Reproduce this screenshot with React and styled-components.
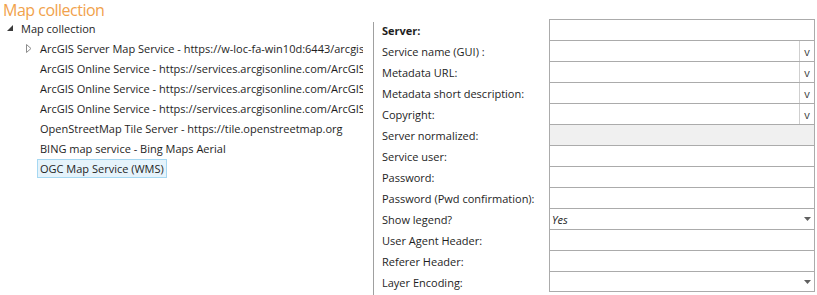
import React from 'react';
import styled, { createGlobalStyle } from 'styled-components';

const GlobalStyle = createGlobalStyle`
  html, body {
    margin: 0;
    padding: 0;
    background: #ffffff;
  }
  body {
    font-family: "Open Sans", "Noto Sans", sans-serif;
    font-size: 11px;
    color: #1e1e1e;
  }
`;

const treeItems = [
  { text: 'ArcGIS Server Map Service - https://w-loc-fa-win10d:6443/arcgis/rest/services', expandable: true },
  { text: 'ArcGIS Online Service - https://services.arcgisonline.com/ArcGIS/rest/services' },
  { text: 'ArcGIS Online Service - https://services.arcgisonline.com/ArcGIS/rest/services' },
  { text: 'ArcGIS Online Service - https://services.arcgisonline.com/ArcGIS/rest/services' },
  { text: 'OpenStreetMap Tile Server - https://tile.openstreetmap.org' },
  { text: 'BING map service - Bing Maps Aerial' },
  { text: 'OGC Map Service (WMS)', selected: true },
];

const fields = [
  { label: 'Server:', bold: true },
  { label: 'Service name (GUI) :', kind: 'button' },
  { label: 'Metadata URL:', kind: 'button' },
  { label: 'Metadata short description:', kind: 'button' },
  { label: 'Copyright:', kind: 'button' },
  { label: 'Server normalized:', disabled: true },
  { label: 'Service user:' },
  { label: 'Password:' },
  { label: 'Password (Pwd confirmation):' },
  { label: 'Show legend?', kind: 'select', value: 'Yes' },
  { label: 'User Agent Header:' },
  { label: 'Referer Header:' },
  { label: 'Layer Encoding:', kind: 'select' },
];

const ExpandedGlyph = () => (
  <svg width="6" height="6" viewBox="0 0 6 6">
    <path d="M6 0 L6 6 L0 6 Z" fill="#3c3c3c" />
  </svg>
);

const CollapsedGlyph = () => (
  <svg width="6" height="9" viewBox="0 0 6 9">
    <path d="M0.5 0.5 L5 4.5 L0.5 8.5 Z" fill="none" stroke="#8c8c8c" strokeWidth="1" />
  </svg>
);

const App = () => {
  return (
    <>
      <GlobalStyle />
      <Page>
        <LeftPane>
          <Title>Map collection</Title>
          <Tree>
            <TreeRow indent={2}>
              <Toggle>
                <ExpandedGlyph />
              </Toggle>
              <ItemLabel>Map collection</ItemLabel>
            </TreeRow>
            {treeItems.map((item, i) => (
              <TreeRow key={i} indent={21}>
                <Toggle>{item.expandable && <CollapsedGlyph />}</Toggle>
                <ItemLabel selected={item.selected}>{item.text}</ItemLabel>
              </TreeRow>
            ))}
          </Tree>
        </LeftPane>
        <Splitter />
        <Form>
          {fields.map((f, i) => (
            <FormRow key={i}>
              <Label bold={f.bold}>{f.label}</Label>
              <Field disabled={f.disabled} last={i === fields.length - 1}>
                <FieldValue>{f.value}</FieldValue>
                {f.kind === 'button' && <MoreButton>v</MoreButton>}
                {f.kind === 'select' && (
                  <SelectArrow>
                    <svg width="7" height="4" viewBox="0 0 7 4">
                      <path d="M0 0 L7 0 L3.5 4 Z" fill="#606060" />
                    </svg>
                  </SelectArrow>
                )}
              </Field>
            </FormRow>
          ))}
        </Form>
      </Page>
    </>
  );
};

export default App;

const Page = styled.div`
  display: flex;
  width: 817px;
  height: 295px;
  overflow: hidden;
`;

const LeftPane = styled.div`
  width: 373px;
  flex: none;
  display: flex;
  flex-direction: column;
`;

const Title = styled.div`
  height: 18px;
  line-height: 20px;
  padding-left: 3px;
  font-size: 16px;
  letter-spacing: -0.5px;
  color: #f1a24c;
  white-space: nowrap;
`;

const Tree = styled.div`
  display: flex;
  flex-direction: column;
  padding-right: 10px;
`;

const TreeRow = styled.div`
  display: flex;
  align-items: center;
  height: 20px;
  padding-left: ${({ indent }) => indent}px;
  white-space: nowrap;
  overflow: hidden;
`;

const Toggle = styled.div`
  width: 16px;
  flex: none;
  display: flex;
  align-items: center;
  justify-content: center;
`;

const ItemLabel = styled.span`
  height: 17px;
  line-height: 17px;
  padding: 0 2px;
  border: 1px solid ${({ selected }) => (selected ? '#a6d8f2' : 'transparent')};
  background: ${({ selected }) => (selected ? '#e5f3fb' : 'transparent')};
  color: #1e1e1e;
`;

const Splitter = styled.div`
  width: 1px;
  margin-top: 22px;
  background: #a0a0a0;
  flex: none;
`;

const Form = styled.div`
  display: flex;
  flex-direction: column;
  padding: 19px 0 0 8px;
`;

const FormRow = styled.div`
  display: flex;
  height: 21px;
`;

const Label = styled.div`
  box-sizing: border-box;
  width: 167px;
  height: 21px;
  padding-top: 3px;
  line-height: 18px;
  font-weight: ${({ bold }) => (bold ? 700 : 400)};
  color: #1e1e1e;
  white-space: nowrap;
`;

const Field = styled.div`
  width: 264px;
  display: flex;
  align-items: stretch;
  border: 1px solid #ababab;
  border-bottom-width: ${({ last }) => (last ? '1px' : '0')};
  background: ${({ disabled }) => (disabled ? '#f0f0f0' : '#ffffff')};
`;

const FieldValue = styled.div`
  flex: 1;
  display: flex;
  align-items: center;
  padding-left: 2px;
  font-style: italic;
  color: #1e1e1e;
`;

const MoreButton = styled.div`
  width: 14px;
  border-left: 1px solid #cfcfcf;
  display: flex;
  align-items: center;
  justify-content: center;
  color: #3a3a3a;
  font-size: 11px;
`;

const SelectArrow = styled.div`
  width: 14px;
  display: flex;
  align-items: center;
  justify-content: center;
`;
